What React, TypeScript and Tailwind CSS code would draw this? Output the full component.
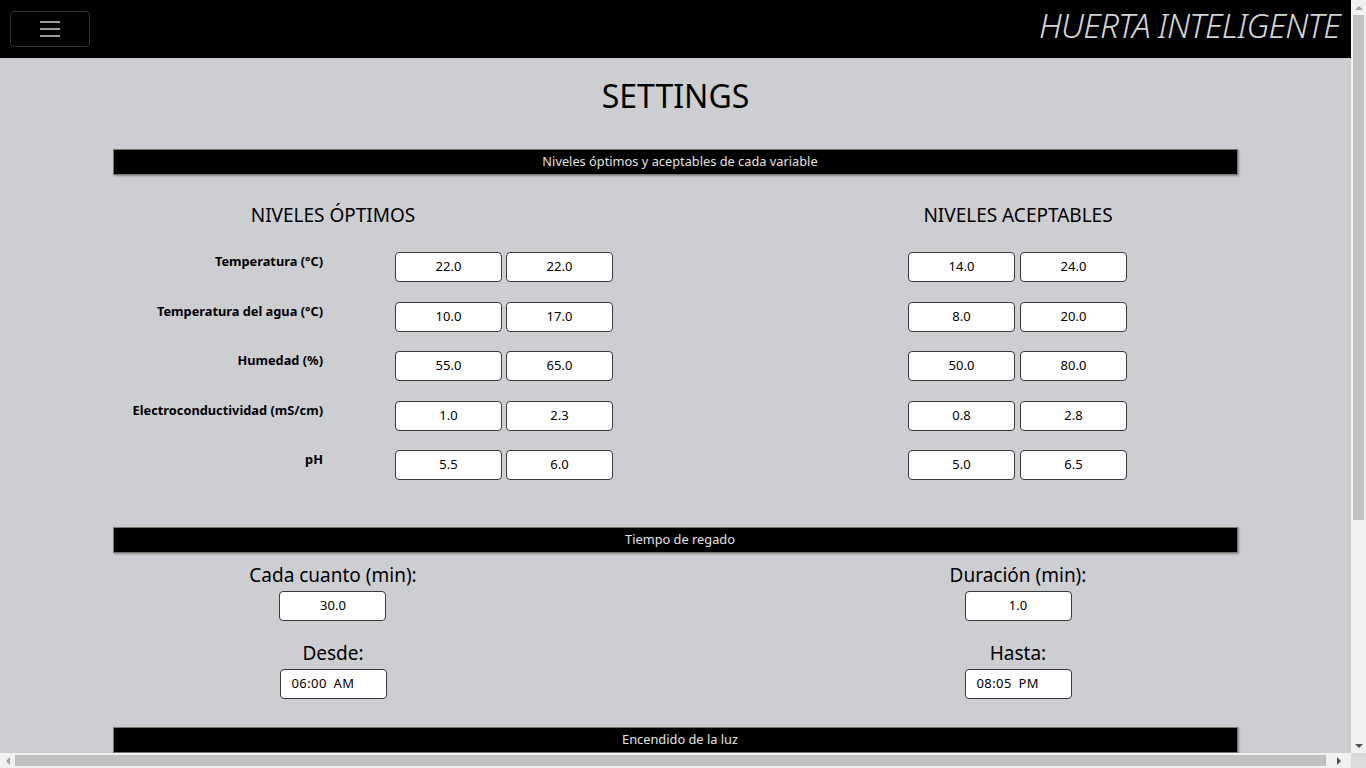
import React from 'react'

const levels = [
  { label: 'Temperatura (°C)', opt: ['22.0', '22.0'], acc: ['14.0', '24.0'] },
  { label: 'Temperatura del agua (°C)', opt: ['10.0', '17.0'], acc: ['8.0', '20.0'] },
  { label: 'Humedad (%)', opt: ['55.0', '65.0'], acc: ['50.0', '80.0'] },
  { label: 'Electroconductividad (mS/cm)', opt: ['1.0', '2.3'], acc: ['0.8', '2.8'] },
  { label: 'pH', opt: ['5.5', '6.0'], acc: ['5.0', '6.5'] },
]

function Bar({ title }: { title: string }) {
  return (
    <div className="h-[26px] bg-black border border-[#77776e] shadow-[1px_1px_2px_rgba(0,0,0,0.35)] flex items-center justify-center pl-[9px] text-[12.8px] text-[#e2e2e2]">
      {title}
    </div>
  )
}

function Box({ value, left }: { value: string; left?: boolean }) {
  return (
    <div
      className={`w-[107px] h-[30px] bg-white border border-[#3a3a3a] rounded-[4px] flex items-center text-[13px] text-black ${
        left ? 'justify-start pl-[11px] tracking-[0.4px] [word-spacing:3px]' : 'justify-center'
      }`}
    >
      {value}
    </div>
  )
}

function Field({ label, value, left }: { label: string; value: string; left?: boolean }) {
  return (
    <div className="flex flex-col items-center">
      <p className="text-[19px] leading-[26px] text-black">{label}</p>
      <div className="mt-[3px]">
        <Box value={value} left={left} />
      </div>
    </div>
  )
}

function Pair({ left, right }: { left: React.ReactNode; right: React.ReactNode }) {
  return (
    <div className="flex">
      <div className="w-[440px] flex justify-center">{left}</div>
      <div className="ml-[355px] w-[220px] flex justify-center">{right}</div>
    </div>
  )
}

function Scrollbars() {
  return (
    <>
      <div className="fixed top-0 right-0 w-[15px] h-[753px] bg-[#f1f1f1] flex flex-col items-center">
        <div className="h-[15px] flex items-center justify-center">
          <div className="w-0 h-0 border-x-[4px] border-x-transparent border-b-[4px] border-b-[#a3a3a3]" />
        </div>
        <div className="w-[11px] h-[505px] bg-[#c1c1c1]" />
        <div className="flex-1" />
        <div className="h-[15px] flex items-center justify-center">
          <div className="w-0 h-0 border-x-[4px] border-x-transparent border-t-[4px] border-t-[#505050]" />
        </div>
      </div>
      <div className="fixed bottom-0 left-0 w-[1351px] h-[15px] bg-[#f1f1f1] flex items-center">
        <div className="w-[15px] flex items-center justify-center">
          <div className="w-0 h-0 border-y-[4px] border-y-transparent border-r-[4px] border-r-[#a3a3a3]" />
        </div>
        <div className="w-[1311px] h-[11px] bg-[#c1c1c1]" />
        <div className="flex-1 flex items-center justify-center">
          <div className="w-0 h-0 border-y-[4px] border-y-transparent border-l-[4px] border-l-[#505050]" />
        </div>
      </div>
      <div className="fixed bottom-0 right-0 w-[15px] h-[15px] bg-[#dcdcdc]" />
    </>
  )
}

export default function App() {
  return (
    <div className="w-[1351px] min-h-screen bg-[#cdced2] font-['Noto_Sans',sans-serif]">
      <header className="h-[58px] bg-black flex items-center justify-between pl-[10px] pr-[11px]">
        <button className="w-[80px] h-[36px] rounded-[4px] border border-[#333] flex flex-col items-center justify-center gap-[5px]">
          <span className="block w-[20px] h-[2px] bg-[#9a9a9a]" />
          <span className="block w-[20px] h-[2px] bg-[#9a9a9a]" />
          <span className="block w-[20px] h-[2px] bg-[#9a9a9a]" />
        </button>
        <h1 className="text-[33.5px] italic font-light text-[#d4d4d4] tracking-tight -mt-[8px]">HUERTA INTELIGENTE</h1>
      </header>

      <main className="w-[1125px] mx-auto pb-[60px]">
        <h2 className="text-[32px] leading-[40px] text-center text-black mt-[18px]">SETTINGS</h2>

        <div className="mt-[33px]">
          <Bar title="Niveles óptimos y aceptables de cada variable" />
        </div>

        <div className="flex mt-[27px] text-[19px] leading-[26px] text-black">
          <div className="w-[440px] text-center">NIVELES ÓPTIMOS</div>
          <div className="ml-[355px] w-[220px] text-center">NIVELES ACEPTABLES</div>
        </div>

        <div className="mt-[24px] flex flex-col gap-[19.5px]">
          {levels.map((row) => (
            <div key={row.label} className="flex items-start">
              <div className="w-[210px] text-right text-[12.8px] leading-[18px] font-bold text-black">{row.label}</div>
              <div className="ml-[72px] flex gap-[4px]">
                <Box value={row.opt[0]} />
                <Box value={row.opt[1]} />
              </div>
              <div className="ml-[295px] flex gap-[5px]">
                <Box value={row.acc[0]} />
                <Box value={row.acc[1]} />
              </div>
            </div>
          ))}
        </div>

        <div className="mt-[47px]">
          <Bar title="Tiempo de regado" />
        </div>

        <div className="mt-[9px] flex flex-col gap-[19px]">
          <Pair left={<Field label="Cada cuanto (min):" value="30.0" />} right={<Field label="Duración (min):" value="1.0" />} />
          <Pair left={<Field label="Desde:" value="06:00 AM" left />} right={<Field label="Hasta:" value="08:05 PM" left />} />
        </div>

        <div className="mt-[28px]">
          <Bar title="Encendido de la luz" />
        </div>

        <div className="mt-[9px] flex flex-col gap-[18px]">
          <Pair left={<Field label="Desde:" value="07:00 AM" left />} right={<Field label="Hasta:" value="09:00 PM" left />} />
        </div>

        <div className="mt-[40px] flex justify-center">
          <button className="px-[24px] h-[36px] rounded-[4px] bg-black text-[#e2e2e2] text-[15px]">Guardar</button>
        </div>
      </main>
      <Scrollbars />
    </div>
  )
}
